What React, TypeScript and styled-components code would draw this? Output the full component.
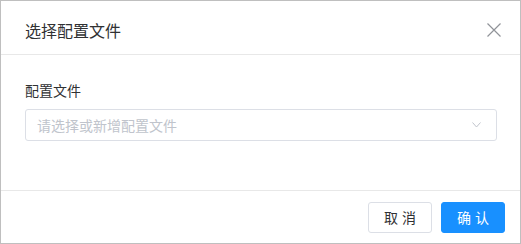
import React from "react";
import styled, { createGlobalStyle } from "styled-components";

const Global = createGlobalStyle`
  html, body { margin: 0; padding: 0; background: #fff; }
  body { font-family: "Noto Sans CJK SC", "Noto Sans", sans-serif; }
  * { box-sizing: border-box; }
`;

const Dialog = styled.div`
  width: 521px;
  height: 244px;
  border: 1px solid #bfbfbf;
  background: #fff;
  display: flex;
  flex-direction: column;
`;

const Header = styled.div`
  height: 54px;
  flex-shrink: 0;
  display: flex;
  align-items: center;
  justify-content: space-between;
  padding: 0 19px 0 24px;
  border-bottom: 1px solid #e8e8e8;
`;

const Title = styled.div`
  font-size: 16px;
  color: #303133;
  line-height: 22px;
  margin-top: 4px;
`;

const Close = styled.button`
  border: none;
  background: none;
  padding: 0;
  width: 14px;
  height: 14px;
  display: flex;
  align-items: center;
  justify-content: center;
  color: #909399;
  margin-top: 4px;
  cursor: pointer;
`;

const Body = styled.div`
  flex: 1;
  padding: 25px 23px 0 24px;
  border-bottom: 1px solid #e8e8e8;
`;

const Label = styled.div`
  font-size: 14px;
  color: #303133;
  line-height: 20px;
  margin-bottom: 9px;
`;

const Select = styled.div`
  height: 32px;
  border: 1px solid #dcdfe6;
  border-radius: 3px;
  display: flex;
  align-items: center;
  justify-content: space-between;
  padding: 0 15px 0 11px;
`;

const Placeholder = styled.span`
  font-size: 14px;
  color: #c0c4cc;
`;

const Footer = styled.div`
  height: 52px;
  flex-shrink: 0;
  display: flex;
  align-items: center;
  justify-content: flex-end;
  gap: 9px;
  padding: 0 15px 0 0;
`;

const Button = styled.button<{ $primary?: boolean }>`
  width: 64px;
  height: 31px;
  border-radius: 3px;
  font-family: "Noto Sans CJK SC", sans-serif;
  font-size: 14px;
  letter-spacing: 4px;
  text-indent: 4px;
  padding: 0;
  border: 1px solid ${(p) => (p.$primary ? "#1890ff" : "#dcdfe6")};
  background: ${(p) => (p.$primary ? "#1890ff" : "#fff")};
  color: ${(p) => (p.$primary ? "#fff" : "#303133")};
  cursor: pointer;
`;

export default function App() {
  return (
    <>
      <Global />
      <Dialog>
        <Header>
          <Title>选择配置文件</Title>
          <Close aria-label="close">
            <svg width="14" height="14" viewBox="0 0 14 14">
              <path d="M0.5 0.5 L13.5 13.5 M13.5 0.5 L0.5 13.5" stroke="currentColor" strokeWidth="1.2" fill="none" />
            </svg>
          </Close>
        </Header>
        <Body>
          <Label>配置文件</Label>
          <Select>
            <Placeholder>请选择或新增配置文件</Placeholder>
            <svg width="9" height="6" viewBox="0 0 9 6">
              <path d="M0.5 0.5 L4.5 5 L8.5 0.5" stroke="#c0c4cc" strokeWidth="1" fill="none" />
            </svg>
          </Select>
        </Body>
        <Footer>
          <Button>取消</Button>
          <Button $primary>确认</Button>
        </Footer>
      </Dialog>
    </>
  );
}
